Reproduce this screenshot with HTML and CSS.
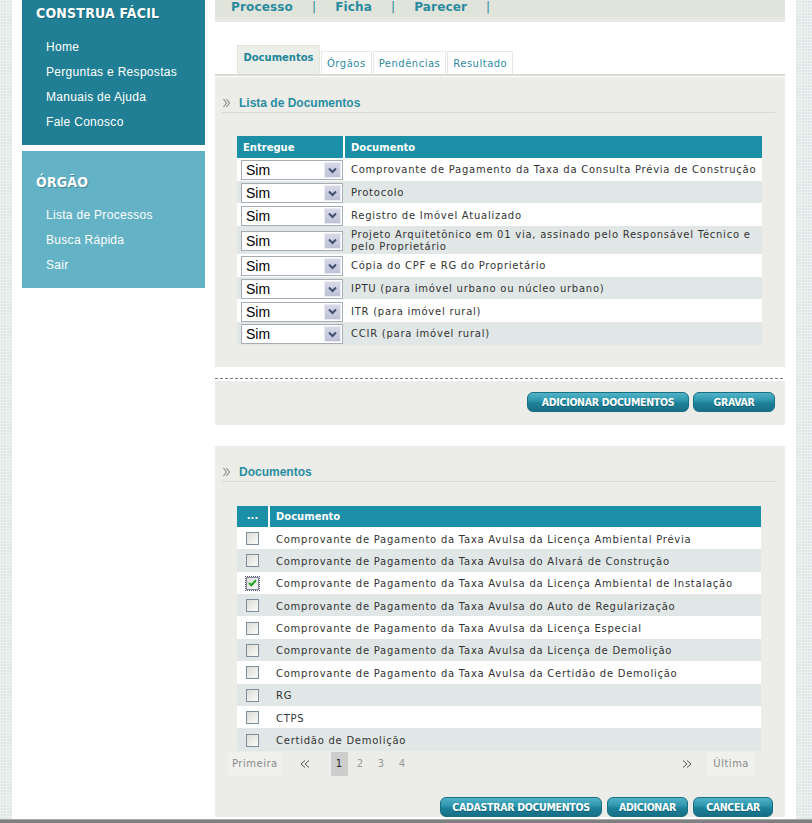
FILE: index.html
```html
<!DOCTYPE html>
<html lang="pt-BR">
<head>
<meta charset="utf-8">
<title>Construa Fácil</title>
<link rel="stylesheet" href="styles.css">
</head>
<body>
<div class="page">
  <aside class="sidebar">
    <div class="side-box side-box--dark">
      <div class="side-title">CONSTRUA FÁCIL</div>
      <ul class="side-links">
        <li>Home</li>
        <li>Perguntas e Respostas</li>
        <li>Manuais de Ajuda</li>
        <li>Fale Conosco</li>
      </ul>
    </div>
    <div class="side-box side-box--light">
      <div class="side-title">ÓRGÃO</div>
      <ul class="side-links">
        <li>Lista de Processos</li>
        <li>Busca Rápida</li>
        <li>Sair</li>
      </ul>
    </div>
  </aside>

  <main class="main">
    <nav class="topnav">
      <span class="topnav-item">Processo</span><span class="topnav-sep">|</span><span class="topnav-item">Ficha</span><span class="topnav-sep">|</span><span class="topnav-item">Parecer</span><span class="topnav-sep">|</span>
    </nav>

    <div class="tabs">
      <div class="tab tab--active">Documentos</div>
      <div class="tab">Órgãos</div>
      <div class="tab">Pendências</div>
      <div class="tab">Resultado</div>
    </div>

    <section class="panel panel--list">
      <h2 class="panel-heading"><svg class="heading-icon" width="8" height="10" viewBox="0 0 8 10"><path d="M0.5 1 L3.5 5 L0.5 9 M3.5 1 L6.5 5 L3.5 9" fill="none" stroke="#8c8c8c" stroke-width="1.1"/></svg>Lista de Documentos</h2>
      <table class="grid grid--docs">
        <thead>
          <tr><th class="col-entregue">Entregue</th><th>Documento</th></tr>
        </thead>
        <tbody>
          <tr><td class="cell-select"><div class="select"><span class="select-value">Sim</span><span class="select-arrow"><svg width="9" height="7" viewBox="0 0 9 7"><path d="M1 1.5 L4.5 5 L8 1.5" fill="none" stroke="#3d4f72" stroke-width="2"/></svg></span></div></td><td>Comprovante de Pagamento da Taxa da Consulta Prévia de Construção</td></tr>
          <tr><td class="cell-select"><div class="select"><span class="select-value">Sim</span><span class="select-arrow"><svg width="9" height="7" viewBox="0 0 9 7"><path d="M1 1.5 L4.5 5 L8 1.5" fill="none" stroke="#3d4f72" stroke-width="2"/></svg></span></div></td><td>Protocolo</td></tr>
          <tr><td class="cell-select"><div class="select"><span class="select-value">Sim</span><span class="select-arrow"><svg width="9" height="7" viewBox="0 0 9 7"><path d="M1 1.5 L4.5 5 L8 1.5" fill="none" stroke="#3d4f72" stroke-width="2"/></svg></span></div></td><td>Registro de Imóvel Atualizado</td></tr>
          <tr class="row-tall"><td class="cell-select"><div class="select"><span class="select-value">Sim</span><span class="select-arrow"><svg width="9" height="7" viewBox="0 0 9 7"><path d="M1 1.5 L4.5 5 L8 1.5" fill="none" stroke="#3d4f72" stroke-width="2"/></svg></span></div></td><td>Projeto Arquitetônico em 01 via, assinado pelo Responsável Técnico e<br>pelo Proprietário</td></tr>
          <tr><td class="cell-select"><div class="select"><span class="select-value">Sim</span><span class="select-arrow"><svg width="9" height="7" viewBox="0 0 9 7"><path d="M1 1.5 L4.5 5 L8 1.5" fill="none" stroke="#3d4f72" stroke-width="2"/></svg></span></div></td><td>Cópia do CPF e RG do Proprietário</td></tr>
          <tr><td class="cell-select"><div class="select"><span class="select-value">Sim</span><span class="select-arrow"><svg width="9" height="7" viewBox="0 0 9 7"><path d="M1 1.5 L4.5 5 L8 1.5" fill="none" stroke="#3d4f72" stroke-width="2"/></svg></span></div></td><td>IPTU (para imóvel urbano ou núcleo urbano)</td></tr>
          <tr><td class="cell-select"><div class="select"><span class="select-value">Sim</span><span class="select-arrow"><svg width="9" height="7" viewBox="0 0 9 7"><path d="M1 1.5 L4.5 5 L8 1.5" fill="none" stroke="#3d4f72" stroke-width="2"/></svg></span></div></td><td>ITR (para imóvel rural)</td></tr>
          <tr><td class="cell-select"><div class="select"><span class="select-value">Sim</span><span class="select-arrow"><svg width="9" height="7" viewBox="0 0 9 7"><path d="M1 1.5 L4.5 5 L8 1.5" fill="none" stroke="#3d4f72" stroke-width="2"/></svg></span></div></td><td>CCIR (para imóvel rural)</td></tr>
        </tbody>
      </table>
    </section>

    <div class="dash-sep"></div>

    <div class="button-bar">
      <span class="btn btn--wide">ADICIONAR DOCUMENTOS</span>
      <span class="btn btn--gravar">GRAVAR</span>
    </div>

    <section class="panel panel--docs">
      <h2 class="panel-heading"><svg class="heading-icon" width="8" height="10" viewBox="0 0 8 10"><path d="M0.5 1 L3.5 5 L0.5 9 M3.5 1 L6.5 5 L3.5 9" fill="none" stroke="#8c8c8c" stroke-width="1.1"/></svg>Documentos</h2>
      <table class="grid grid--check">
        <thead>
          <tr><th class="col-dots">...</th><th>Documento</th></tr>
        </thead>
        <tbody>
          <tr><td class="cell-check"><span class="checkbox"></span></td><td>Comprovante de Pagamento da Taxa Avulsa da Licença Ambiental Prévia</td></tr>
          <tr><td class="cell-check"><span class="checkbox"></span></td><td>Comprovante de Pagamento da Taxa Avulsa do Alvará de Construção</td></tr>
          <tr><td class="cell-check"><span class="checkbox checkbox--checked"><svg width="9" height="8" viewBox="0 0 9 8"><path d="M1 4 L3.3 6.3 L8 1.2" fill="none" stroke="#22a022" stroke-width="2"/></svg></span></td><td>Comprovante de Pagamento da Taxa Avulsa da Licença Ambiental de Instalação</td></tr>
          <tr><td class="cell-check"><span class="checkbox"></span></td><td>Comprovante de Pagamento da Taxa Avulsa do Auto de Regularização</td></tr>
          <tr><td class="cell-check"><span class="checkbox"></span></td><td>Comprovante de Pagamento da Taxa Avulsa da Licença Especial</td></tr>
          <tr><td class="cell-check"><span class="checkbox"></span></td><td>Comprovante de Pagamento da Taxa Avulsa da Licença de Demolição</td></tr>
          <tr><td class="cell-check"><span class="checkbox"></span></td><td>Comprovante de Pagamento da Taxa Avulsa da Certidão de Demolição</td></tr>
          <tr><td class="cell-check"><span class="checkbox"></span></td><td>RG</td></tr>
          <tr><td class="cell-check"><span class="checkbox"></span></td><td>CTPS</td></tr>
          <tr><td class="cell-check"><span class="checkbox"></span></td><td>Certidão de Demolição</td></tr>
        </tbody>
      </table>

      <div class="pager">
        <span class="pager-end">Primeira</span>
        <span class="pager-arrow pager-arrow--prev"><svg width="10" height="8" viewBox="0 0 10 8"><path d="M5 0.5 L1 4 L5 7.5 M9 0.5 L5 4 L9 7.5" fill="none" stroke="#555" stroke-width="1"/></svg></span>
        <span class="pager-page pager-page--current">1</span>
        <span class="pager-page">2</span>
        <span class="pager-page">3</span>
        <span class="pager-page">4</span>
        <span class="pager-arrow pager-arrow--next"><svg width="10" height="8" viewBox="0 0 10 8"><path d="M1 0.5 L5 4 L1 7.5 M5 0.5 L9 4 L5 7.5" fill="none" stroke="#555" stroke-width="1"/></svg></span>
        <span class="pager-end pager-end--last">Última</span>
      </div>

      <div class="button-row">
        <span class="btn btn--wide">CADASTRAR DOCUMENTOS</span>
        <span class="btn">ADICIONAR</span>
        <span class="btn btn--cancel">CANCELAR</span>
      </div>
    </section>
  </main>
</div>
<div class="window-edge"></div>
</body>
</html>
```

FILE: styles.css
```css
* { box-sizing: border-box; }

html, body { margin: 0; padding: 0; }

body {
  background-color: #dde8e6;
  background-image:
    repeating-linear-gradient(0deg, rgba(255,255,255,0.35) 0 1px, transparent 1px 3px),
    repeating-linear-gradient(90deg, rgba(255,255,255,0.35) 0 1px, transparent 1px 3px);
  font-family: "DejaVu Sans", Verdana, sans-serif;
  color: #333;
  overflow: hidden;
}

.page {
  display: flex;
  width: 784px;
  height: 819px;
  margin-left: 12px;
  background: #fff;
  overflow: hidden;
}

/* ---------- Sidebar ---------- */
.sidebar {
  width: 183px;
  margin: 0 10px;
  flex: none;
}

.side-box {
  color: #fff;
}

.side-box--dark {
  background: #207f94;
  padding: 5px 0 0;
  height: 145px;
}

.side-box--light {
  background: #63b2c5;
  margin-top: 6px;
  padding: 23px 0 0;
  height: 137px;
}

.side-title {
  font-family: "Liberation Sans Narrow", "DejaVu Sans Condensed", "Liberation Sans", sans-serif;
  font-weight: bold;
  font-size: 14px;
  line-height: 17px;
  padding-left: 14px;
  text-shadow: 1px 1px 0 rgba(0, 40, 50, 0.35);
  letter-spacing: 0.2px;
}

.side-links {
  list-style: none;
  margin: 13px 0 0;
  padding: 0 0 0 24px;
}

.side-box--light .side-links { margin-top: 12px; }

.side-links li {
  font-family: "Liberation Sans", Arial, sans-serif;
  font-size: 12px;
  line-height: 25px;
  letter-spacing: 0.3px;
}

/* ---------- Main ---------- */
.main {
  width: 570px;
  flex: none;
}

.topnav {
  height: 22px;
  background: #e0e4db;
  border-bottom: 5px solid #e8ebe4;
  padding-left: 16px;
  padding-top: 1px;
  display: flex;
  align-items: flex-start;
  font-weight: bold;
  font-size: 12px;
  line-height: 13px;
  color: #2a8b9e;
  letter-spacing: 0.15px;
}

.topnav-sep {
  font-weight: normal;
  margin: 0 19px;
}

.tabs {
  display: flex;
  align-items: flex-end;
  margin-top: 23px;
  padding-left: 22px;
  border-bottom: 2px solid #d9dbd5;
  height: 31px;
}

.tab {
  height: 23px;
  background: #fff;
  border: 1px solid #e6e8e4;
  border-bottom: 0;
  margin-left: 1px;
  padding: 0 5px;
  font-size: 10px;
  line-height: 23px;
  letter-spacing: 0.5px;
  color: #2e8c9f;
}

.tab--active {
  height: 29px;
  margin-left: 0;
  width: 83px;
  background: #eceee9;
  border-color: #e3e5df;
  font-weight: bold;
  letter-spacing: 0;
  line-height: 13px;
  padding-top: 5px;
  text-align: center;
  color: #22869a;
}

.panel {
  background: #ecede8;
  padding: 0 10px 0 7px;
}

.panel--list {
  margin-top: 1px;
  padding-bottom: 22px;
}

.panel-heading {
  margin: 0;
  height: 36px;
  padding: 19px 0 0 0;
  border-bottom: 1px solid #d8dad4;
  display: flex;
  align-items: flex-start;
  font-family: "Liberation Sans", Arial, sans-serif;
  font-weight: bold;
  font-size: 12px;
  line-height: 15px;
  color: #2a8ea3;
}

.heading-icon {
  margin: 2px 8px 0 1px;
  flex: none;
}

/* ---------- Tables ---------- */
.grid {
  border-collapse: separate;
  border-spacing: 0;
  margin: 24px 15px 0;
  width: 523px;
  font-size: 10px;
  letter-spacing: 0.75px;
}

.grid th {
  background: #1b8fa6;
  color: #fff;
  font-weight: bold;
  letter-spacing: 0;
  text-align: left;
  height: 22px;
  padding: 1px 6px 0;
  line-height: 12px;
}

.grid th + th {
  border-left: 2px solid #fff;
}

.grid td {
  padding: 2px 6px 0;
  line-height: 12px;
  white-space: nowrap;
  color: #333;
}

.grid td + td {
  padding-left: 8px;
}

.grid tbody tr:nth-child(odd) td { background: #fff; }
.grid tbody tr:nth-child(even) td { background: #e1e7e6; }

.grid--docs { margin-top: 23px; }
.grid--docs tbody tr { height: 22.7px; }
.grid--docs tbody tr.row-tall { height: 28px; }

.col-entregue { width: 107px; }

.cell-select {
  padding: 2px 0 0 4px !important;
}

.select {
  display: flex;
  width: 102px;
  height: 20px;
  border: 1px solid #a6acb2;
  background: #fff;
}

.select-value {
  flex: 1;
  font-family: "Liberation Sans", Arial, sans-serif;
  font-size: 14px;
  line-height: 18px;
  letter-spacing: 0;
  color: #000;
  padding-left: 4px;
}

.select-arrow {
  width: 17px;
  margin: 1px;
  background: linear-gradient(#d7d8e8, #bfc1d6);
  border: 1px solid #e9eaf3;
  display: flex;
  align-items: center;
  justify-content: center;
}

.grid--check {
  width: 524px;
  margin-top: 24px;
}

.grid--check th { height: 21px; padding-top: 1px; }
.grid--check tbody tr { height: 22.4px; }
.grid--check td { padding-top: 3px; }

.col-dots {
  width: 31px;
  padding: 0 !important;
  text-align: center !important;
  line-height: 8px !important;
  vertical-align: middle;
}

.cell-check {
  text-align: center;
  padding: 3px 0 0 !important;
}

.checkbox {
  display: inline-block;
  width: 13px;
  height: 13px;
  border: 1px solid #7b8e9e;
  background: linear-gradient(135deg, #dcdcd6, #fbfbf9);
  vertical-align: middle;
  position: relative;
  top: -1px;
}

.checkbox--checked {
  outline: 1px dotted #6a4a7a;
  outline-offset: 0;
  display: inline-flex;
  align-items: center;
  justify-content: center;
}

/* ---------- Pager ---------- */
.pager {
  display: flex;
  align-items: center;
  height: 25px;
  margin-top: 1px;
  margin-left: 6px;
  width: 527px;
  font-size: 10px;
  letter-spacing: 0.5px;
  color: #8a8a8a;
}

.pager-end {
  background: #f0f0ec;
  height: 24px;
  line-height: 24px;
  padding: 0 4px;
}

.pager-end--last {
  padding: 0 6px;
}

.pager-arrow {
  display: flex;
  align-items: center;
  height: 24px;
}

.pager-arrow--prev { margin: 0 21px 0 18px; }
.pager-arrow--next { margin: 0 15px 0 auto; }

.pager-page {
  width: 17px;
  height: 24px;
  line-height: 24px;
  text-align: center;
  margin-right: 4px;
  color: #9a9a9a;
}

.pager-page--current {
  background: #cdcdcd;
  color: #222;
}

/* ---------- Buttons ---------- */
.dash-sep {
  margin-top: 11px;
  width: 568px;
  border-top: 1px dashed #7c7c7c;
}

.button-bar {
  margin-top: 2px;
  height: 44px;
  background: #ecede8;
  display: flex;
  justify-content: flex-end;
  align-items: flex-start;
  padding: 11px 10px 0 0;
  gap: 4px;
  margin-bottom: 21px;
}

.button-row {
  display: flex;
  justify-content: flex-end;
  gap: 5px;
  margin-top: 20px;
  padding-right: 2px;
}

.btn {
  display: block;
  width: 81px;
  height: 20px;
  border-radius: 6px;
  border: 1px solid #176f84;
  background: linear-gradient(#52b3c7 0%, #2b94ac 45%, #1c8199 55%, #176f86 100%);
  color: #fff;
  font-family: "DejaVu Sans Condensed", "Liberation Sans", sans-serif;
  font-weight: bold;
  font-size: 10.5px;
  line-height: 18px;
  text-align: center;
  text-shadow: 0 1px 0 rgba(0, 50, 60, 0.45);
  letter-spacing: -0.3px;
}

.btn--wide { width: 162px; }
.btn--gravar { width: 82px; }
.btn--cancel { width: 80px; }

.window-edge {
  height: 4px;
  background: #7f7f7f;
  border-top: 1px solid #a8a8a8;
}
```
